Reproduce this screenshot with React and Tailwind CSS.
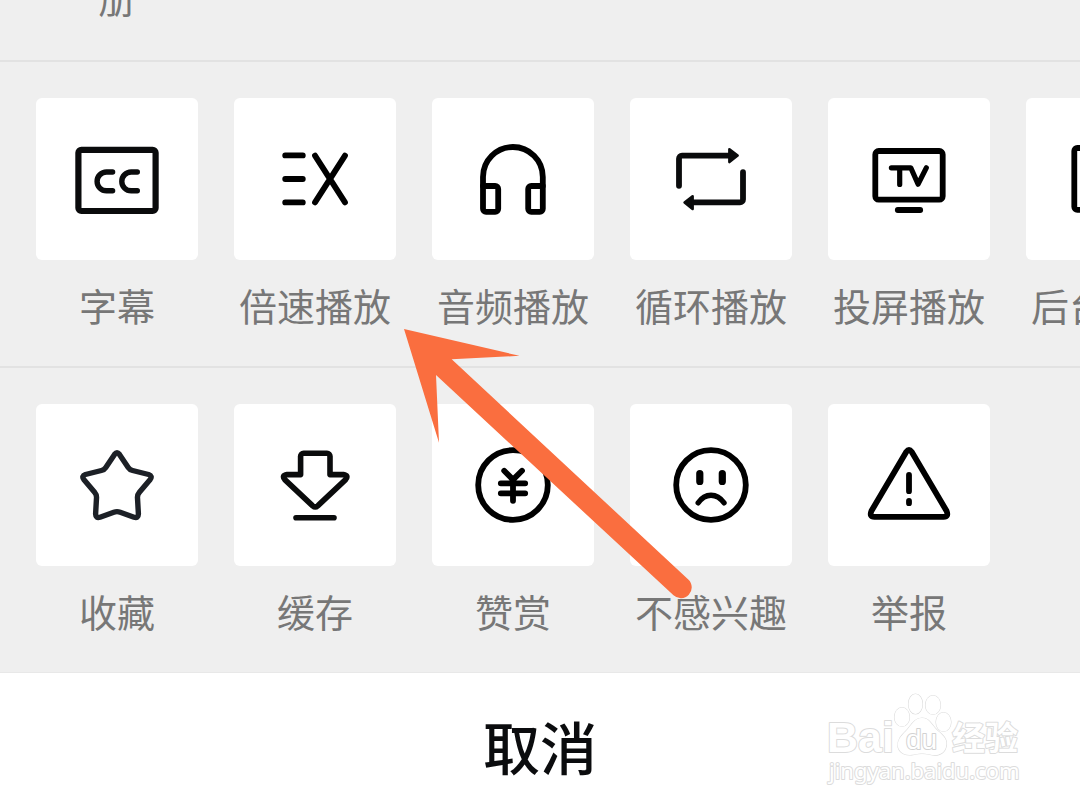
import React from "react";

const INK = "#0a0b0c";

// every icon is drawn on the same 162 x 162 grid as its tile
function Icon({ children, stroke = INK, width = 5.8 }) {
  return (
    <svg
      viewBox="0 0 162 162"
      className="h-full w-full"
      fill="none"
      stroke={stroke}
      strokeWidth={width}
      strokeLinecap="round"
      strokeLinejoin="round"
      aria-hidden="true"
    >
      {children}
    </svg>
  );
}

const SubtitleIcon = () => (
  <Icon>
    <rect x="42.4" y="51.8" width="77.2" height="61.2" rx="3" strokeWidth="6.2" />
    <path d="M76.6 74H70.5a9.4 9.4 0 0 0 0 18.8H76.6" strokeWidth="5.4" />
    <path d="M101.3 74H95.2a9.4 9.4 0 0 0 0 18.8H101.3" strokeWidth="5.4" />
  </Icon>
);

const SpeedIcon = () => (
  <Icon stroke="#000">
    <path d="M51.2 57.4H68.8M51.2 81H68.8M51.2 104.4H68.8" />
    <path d="M81 57.6L111 104.4M111 57.6L81 104.4" />
  </Icon>
);

const AudioIcon = () => (
  <Icon stroke="#000">
    <path d="M51 88V78.9a29.9 29.9 0 0 1 59.8 0V88" />
    <path d="M51 88H63.2a3 3 0 0 1 3 3V110.8a3 3 0 0 1-3 3H54a3 3 0 0 1-3-3Z" />
    <path d="M110.8 88H99.2a3 3 0 0 0-3 3V110.8a3 3 0 0 0 3 3H107.8a3 3 0 0 0 3-3Z" />
  </Icon>
);

const LoopIcon = () => (
  <Icon>
    <path d="M49 87.8V60.7a3 3 0 0 1 3-3H99" />
    <path d="M113 74.2V101.4a3 3 0 0 1-3 3H63" />
    <path d="M99.4 51.2L107.6 57.6L99.4 64Z" fill={INK} strokeWidth="2.6" />
    <path d="M62.6 98.2L54.6 104.5L62.6 110.9Z" fill={INK} strokeWidth="2.6" />
  </Icon>
);

const TvIcon = () => (
  <Icon stroke="#000">
    <rect x="47.3" y="53" width="67.4" height="48.7" rx="3.4" />
    <path d="M69.8 112H92.2" />
    <path d="M63.4 69.8H82.8L90.1 86.2L98.3 69.8M71.7 69.8V86.4" strokeWidth="5.2" />
  </Icon>
);

const BackgroundIcon = () => (
  <Icon stroke="#000">
    <rect x="48.3" y="50" width="65.4" height="61.8" rx="3" />
    <path d="M72 68L94 81L72 94Z" />
  </Icon>
);

const StarIcon = () => (
  <Icon stroke="#1c2026" width={5.4}>
    <path d="M78.7 50.2Q81 47 83.3 50.2L92.2 63.4Q93.8 65.8 96.6 66.5L112.6 70.5Q116.8 72 114.2 75.4L103.4 88.2Q101.2 90.8 101.5 94L102.4 110Q102.3 114.6 98 113.2L84.2 108.2Q81 107 77.8 108.2L64 113.2Q59.7 114.6 59.6 110L60.5 94Q60.8 90.8 58.6 88.2L47.8 75.4Q45.2 72 49.4 70.5L65.4 66.5Q68.2 65.8 69.8 63.4Z" />
  </Icon>
);

const DownloadIcon = () => (
  <Icon width={5.6}>
    <path d="M66.6 70.6V52.3a3 3 0 0 1 3-3H93a3 3 0 0 1 3 3V70.6H109.4Q115 71.4 111.6 75.6L84.2 101.4Q81.2 104.4 78.2 101.4L50.8 75.6Q47.4 71.4 53 70.6Z" />
    <path d="M62 113.7H100" />
  </Icon>
);

const RewardIcon = () => (
  <Icon stroke="#000">
    <circle cx="81" cy="81" r="34.8" />
    <path d="M72.2 66.8L81 75.6L90 66.8M81 75.6V96.8M68.8 79.3H93.2M68.8 89.3H93.2" />
  </Icon>
);

const DislikeIcon = () => (
  <Icon stroke="#000">
    <circle cx="81" cy="81" r="34.8" />
    <path d="M69.8 69.6V77.4M92.3 69.6V77.4" strokeWidth="7.2" />
    <path d="M68.2 98.8Q73.4 91.2 81 91.2T94 98.8" strokeWidth="5.4" />
  </Icon>
);

const ReportIcon = () => (
  <Icon stroke="#000">
    <path d="M78.5 47.6Q81 44 83.5 47.6L118.6 107Q120.9 112.8 115.6 112.8H46.4Q41.1 112.8 43.4 107Z" />
    <path d="M81 71V87.2M81 96.8V99.2" />
  </Icon>
);

const PLAYBACK_ACTIONS = [
  { label: "字幕", icon: SubtitleIcon },
  { label: "倍速播放", icon: SpeedIcon },
  { label: "音频播放", icon: AudioIcon },
  { label: "循环播放", icon: LoopIcon },
  { label: "投屏播放", icon: TvIcon },
  { label: "后台播放", icon: BackgroundIcon },
];

const VIDEO_ACTIONS = [
  { label: "收藏", icon: StarIcon },
  { label: "缓存", icon: DownloadIcon },
  { label: "赞赏", icon: RewardIcon },
  { label: "不感兴趣", icon: DislikeIcon },
  { label: "举报", icon: ReportIcon },
];

function ActionRow({ actions }) {
  return (
    <div className="flex gap-9 overflow-x-auto border-t-2 border-[#e2e2e2] px-9 pt-9 pb-[34px] [scrollbar-width:none]">
      {actions.map(({ label, icon: ActionIcon }) => (
        <button key={label} type="button" className="w-[162px] shrink-0">
          <span className="block h-[162px] rounded-md bg-white">
            <ActionIcon />
          </span>
          <span className="mt-[18px] block text-center text-[38px] leading-[54px] whitespace-nowrap text-[#777]">
            {label}
          </span>
        </button>
      ))}
    </div>
  );
}

function PointerArrow() {
  return (
    <svg
      viewBox="400 325 300 280"
      className="pointer-events-none absolute top-[325px] left-[400px] h-[280px] w-[300px]"
      aria-hidden="true"
    >
      <path
        d="M404 329L519.5 355.8L451.7 359.3L688.3 579.5A10.8 10.8 0 0 1 673.5 595.3L436 375L439 442.7Z"
        fill="#fa6e3f"
      />
    </svg>
  );
}

function Watermark() {
  return (
    <svg
      viewBox="0 0 204 100"
      className="pointer-events-none absolute right-[54px] bottom-5 h-[100px] w-[204px] [paint-order:stroke]"
      fill="#fff"
      stroke="#dcdcdc"
      strokeWidth="2"
      strokeLinejoin="round"
    >
      <text
        x="5"
        y="63"
        fontSize="43"
        fontWeight="bold"
        fontFamily="'Liberation Sans', Arial, sans-serif"
      >
        Bai
      </text>
      <g strokeWidth="1.2">
        <ellipse cx="80" cy="28" rx="7.5" ry="9.5" />
        <ellipse cx="93.5" cy="15" rx="7" ry="10" />
        <ellipse cx="111" cy="16" rx="7.5" ry="9.5" />
        <ellipse cx="121.5" cy="33" rx="7.5" ry="9.5" />
        <path d="M100 29C108 29 110 37 116 42C122 47 126 51 124 58C122 66 114 67 108 65.5C102 64 98 64 92 65.5C85 67 78 65 76 58C75 51 79 47 84 42C89 37 92 29 100 29Z" />
      </g>
      <text
        x="84"
        y="60"
        fontSize="28"
        stroke="#d2d2d2"
        fontFamily="'Liberation Sans', Arial, sans-serif"
      >
        du
      </text>
      <text
        x="130"
        y="61"
        fontSize="33"
        fontWeight="bold"
        fontFamily="'Noto Sans CJK SC', sans-serif"
      >
        经验
      </text>
      <text x="7" y="90" fontSize="22" fontFamily="'Noto Sans', sans-serif">
        jingyan.baidu.com
      </text>
    </svg>
  );
}

export default function App() {
  return (
    <main className="relative min-h-screen overflow-hidden bg-white font-['Noto_Sans_CJK_SC',sans-serif]">
      <section className="bg-[#efefef]">
        <div className="flex h-[60px] items-end overflow-hidden px-9 pb-9">
          <span className="w-[162px] text-center text-[38px] leading-[54px] text-[#777]">
            册
          </span>
        </div>
        <ActionRow actions={PLAYBACK_ACTIONS} />
        <ActionRow actions={VIDEO_ACTIONS} />
      </section>
      <footer className="relative border-t border-[#e8e8e8]">
        <button
          type="button"
          className="block w-full pt-8 pb-6 text-center text-[57px] leading-[80px] font-medium text-[#0b0c0e]"
        >
          取消
        </button>
        <Watermark />
      </footer>
      <PointerArrow />
    </main>
  );
}
